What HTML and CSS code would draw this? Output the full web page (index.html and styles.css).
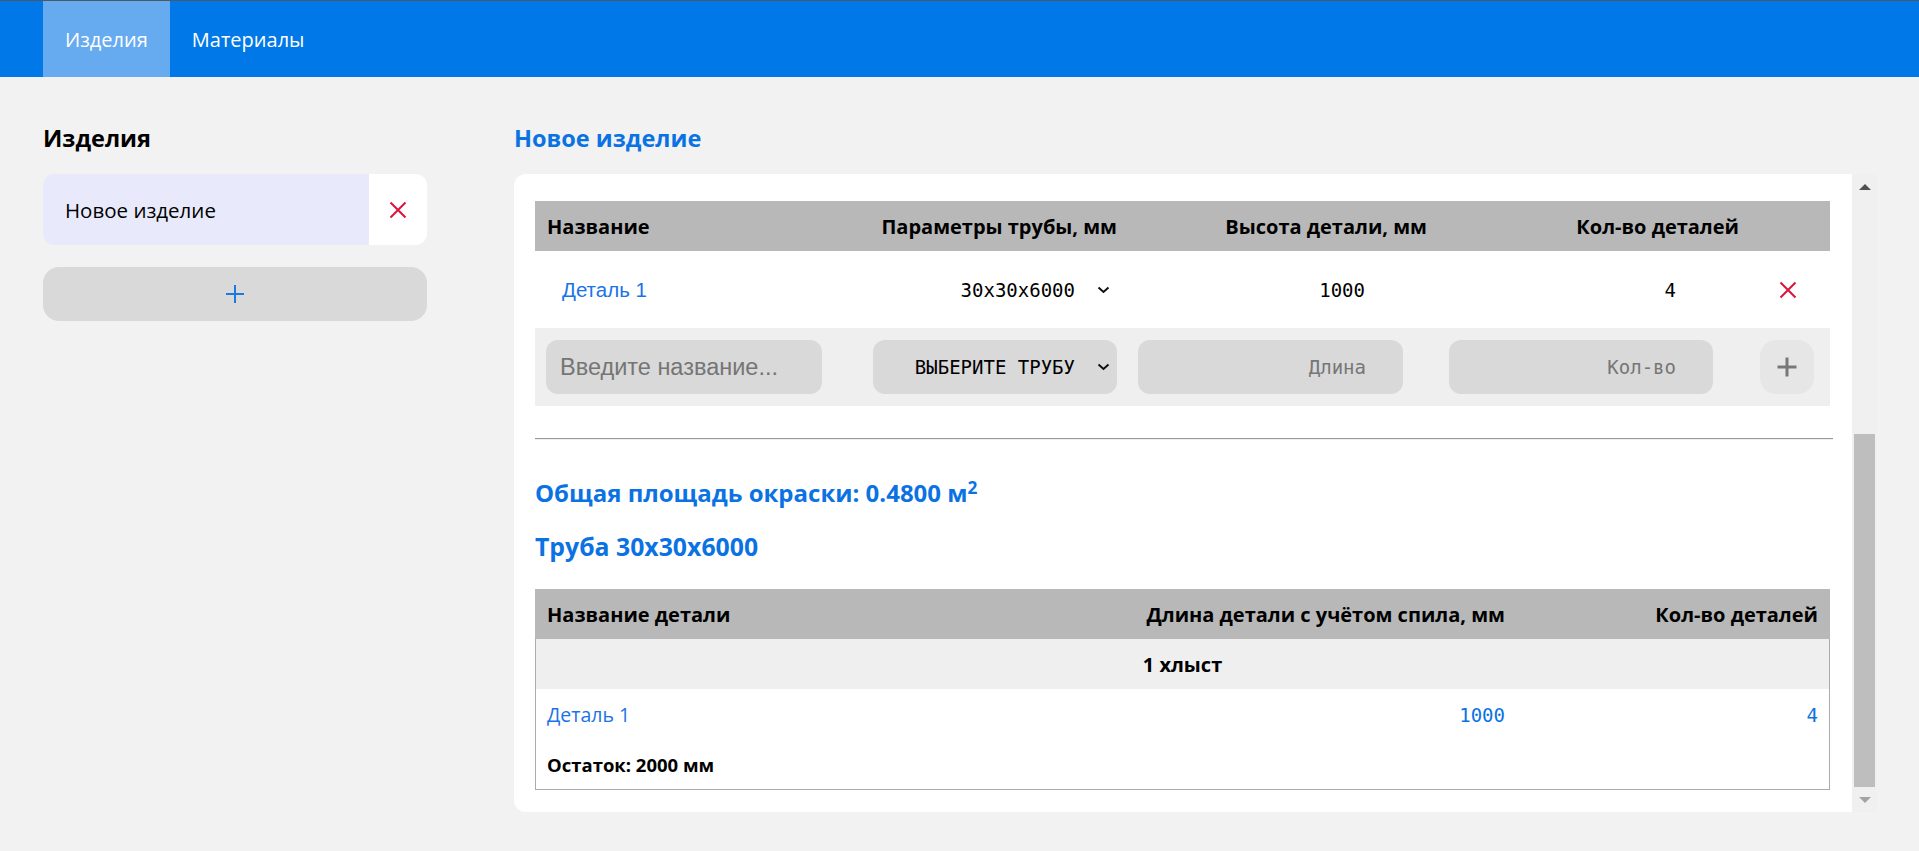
FILE: index.html
```html
<!DOCTYPE html>
<html lang="ru">
<head>
<meta charset="utf-8">
<title>Изделия</title>
<link rel="stylesheet" href="styles.css">
</head>
<body>
<header class="topbar">
  <nav class="tabs">
    <a class="tab tab-active">Изделия</a>
    <a class="tab">Материалы</a>
  </nav>
</header>
<main class="layout">
  <aside class="sidebar">
    <h2 class="side-title">Изделия</h2>
    <div class="product-item">
      <span class="product-name">Новое изделие</span>
      <button class="product-del" type="button">
        <svg width="18" height="18" viewBox="0 0 18 18"><path d="M1.5 1.5 L16.5 16.5 M16.5 1.5 L1.5 16.5" stroke="#dc143c" stroke-width="2" fill="none"/></svg>
      </button>
    </div>
    <button class="add-product" type="button">
      <svg width="20" height="20" viewBox="0 0 20 20"><path d="M10 1 V19 M1 10 H19" stroke="#1a7ae2" stroke-width="2" fill="none"/></svg>
    </button>
  </aside>
  <section class="editor">
    <h2 class="editor-title">Новое изделие</h2>
    <div class="card">
      <div class="card-body">
        <div class="parts">
          <div class="parts-row parts-head">
            <div class="c c1">Название</div>
            <div class="c c2 right">Параметры трубы, мм</div>
            <div class="c c3 right">Высота детали, мм</div>
            <div class="c c4 right">Кол-во деталей</div>
            <div class="c c5"></div>
          </div>
          <div class="parts-row parts-item">
            <div class="c c1"><a class="part-link">Деталь 1</a></div>
            <div class="c c2">
              <div class="pipe-select">
                <span class="mono">30x30x6000</span>
                <svg class="chev" width="13" height="8" viewBox="0 0 13 8"><path d="M1.5 1.5 L6.5 6 L11.5 1.5" stroke="#111" stroke-width="2" fill="none"/></svg>
              </div>
            </div>
            <div class="c c3 right"><span class="mono val-h">1000</span></div>
            <div class="c c4 right"><span class="mono val-q">4</span></div>
            <div class="c c5">
              <button class="row-del" type="button">
                <svg width="18" height="18" viewBox="0 0 18 18"><path d="M1.5 1.5 L16.5 16.5 M16.5 1.5 L1.5 16.5" stroke="#dc143c" stroke-width="2" fill="none"/></svg>
              </button>
            </div>
          </div>
          <div class="parts-row parts-new">
            <div class="c c1"><input class="field field-name" type="text" placeholder="Введите название..."></div>
            <div class="c c2">
              <div class="pipe-select pipe-select-input">
                <span class="mono">ВЫБЕРИТЕ ТРУБУ</span>
                <svg class="chev" width="13" height="8" viewBox="0 0 13 8"><path d="M1.5 1.5 L6.5 6 L11.5 1.5" stroke="#111" stroke-width="2" fill="none"/></svg>
              </div>
            </div>
            <div class="c c3"><input class="field field-num field-len" type="text" placeholder="Длина"></div>
            <div class="c c4"><input class="field field-num field-qty" type="text" placeholder="Кол-во"></div>
            <div class="c c5">
              <button class="row-add" type="button">
                <svg width="20" height="20" viewBox="0 0 20 20"><path d="M10 0.5 V19.5 M0.5 10 H19.5" stroke="#787878" stroke-width="3" fill="none"/></svg>
              </button>
            </div>
          </div>
        </div>
        <hr class="divider">
        <h3 class="summary summary-area">Общая площадь окраски: 0.4800 м<sup class="sq">2</sup></h3>
        <h3 class="summary summary-pipe">Труба 30x30x6000</h3>
        <div class="cut">
          <div class="cut-row cut-head">
            <div class="k k1">Название детали</div>
            <div class="k k2 right">Длина детали с учётом спила, мм</div>
            <div class="k k3 right">Кол-во деталей</div>
          </div>
          <div class="cut-row cut-group">
            <div class="k kall">1 хлыст</div>
          </div>
          <div class="cut-row cut-item">
            <div class="k k1"><a class="cut-link">Деталь 1</a></div>
            <div class="k k2 right"><span class="mono blue">1000</span></div>
            <div class="k k3 right"><span class="mono blue">4</span></div>
          </div>
          <div class="cut-row cut-rest">
            <div class="k kall-left">Остаток: 2000 мм</div>
          </div>
        </div>
      </div>
      <div class="scrollbar">
        <div class="sb-btn"><span class="sb-up"></span></div>
        <div class="sb-track"><div class="sb-thumb"></div></div>
        <div class="sb-btn"><span class="sb-down"></span></div>
      </div>
    </div>
  </section>
</main>
</body>
</html>
```

FILE: styles.css
```css
* { box-sizing: border-box; }

html, body {
  margin: 0;
  padding: 0;
  background: #f2f2f2;
  font-family: "Open Sans", "Noto Sans", Arial, sans-serif;
  color: #000;
}

.topbar {
  height: 77px;
  background: #0078e7;
  border-top: 1px solid #4d5864;
  padding-left: 43px;
}

.tabs {
  display: flex;
  height: 100%;
}

.tab {
  display: flex;
  align-items: center;
  padding: 0 22px;
  color: #fff;
  font-size: 20px;
  cursor: pointer;
}

.tab-active {
  background: #66aaf0;
}

.layout {
  display: flex;
  gap: 87px;
  padding: 46px 42px 0 43px;
}

.sidebar {
  width: 384px;
  flex: none;
}

.side-title,
.editor-title {
  margin: 0;
  font-size: 23.5px;
  line-height: 30px;
  font-weight: 700;
}

.editor-title {
  color: #0b72e3;
}

.product-item {
  margin-top: 21px;
  height: 71px;
  display: flex;
  border-radius: 11px;
  overflow: hidden;
  background: #e8eafc;
}

.product-name {
  flex: 1;
  display: flex;
  align-items: center;
  padding-left: 22px;
  font-size: 20.5px;
}

.product-del {
  width: 58px;
  border: 0;
  padding: 0;
  background: #fff;
  display: flex;
  align-items: center;
  justify-content: center;
}

.add-product {
  margin-top: 22px;
  width: 100%;
  height: 54px;
  border: 0;
  border-radius: 16px;
  background: #d9d9d9;
  display: flex;
  align-items: center;
  justify-content: center;
  padding: 0;
}

.editor {
  flex: 1;
}

.card {
  margin-top: 21px;
  height: 638px;
  display: flex;
}

.card-body {
  flex: 1;
  background: #fff;
  border-radius: 12px 0 0 12px;
  padding: 27px 19px 0 21px;
}

.parts {
  width: 1295px;
}

.parts-row {
  display: grid;
  grid-template-columns: 313px 279px 300px 313px 90px;
  align-items: center;
}

.c {
  display: flex;
  align-items: center;
}

.right {
  justify-content: flex-end;
}

.parts-head {
  height: 50px;
  background: #b8b8b8;
  font-weight: 700;
  font-size: 20px;
}

.parts-head .c1 { padding-left: 12px; }
.parts-head .c2 { padding-right: 10px; }
.parts-head .c3 { padding-right: 0; }
.parts-head .c4 { padding-right: 1px; }

.parts-item {
  height: 77px;
  background: #fff;
}

.part-link {
  padding-left: 27px;
  color: #1a73e8;
  font-family: "Liberation Sans", Arial, sans-serif;
  font-size: 20.5px;
  cursor: pointer;
}

.mono {
  font-family: "DejaVu Sans Mono", "Liberation Mono", monospace;
  font-size: 19px;
}

.pipe-select {
  margin-left: 25px;
  width: 244px;
  height: 54px;
  display: flex;
  align-items: center;
  justify-content: flex-end;
  gap: 22px;
  padding-right: 7px;
  border-radius: 12px;
}

.pipe-select-input {
  background: #d9d9d9;
}

.val-h { padding-right: 62px; }
.val-q { padding-right: 64px; }

.row-del {
  margin-left: 39px;
  width: 18px;
  height: 18px;
  padding: 0;
  border: 0;
  background: none;
  display: flex;
}

.parts-new {
  height: 78px;
  background: #efefef;
}

.field {
  height: 54px;
  border: 0;
  border-radius: 12px;
  background: #d9d9d9;
  outline: none;
  font-size: 19px;
}

.field-name {
  margin-left: 11px;
  width: 276px;
  padding-left: 14px;
  font-family: "Liberation Sans", Arial, sans-serif;
  font-size: 23.5px;
}

.field-name::placeholder {
  color: #757575;
}

.field-num {
  font-family: "DejaVu Sans Mono", "Liberation Mono", monospace;
  font-size: 19px;
  text-align: right;
  padding-right: 37px;
}

.field-num::placeholder {
  color: #767676;
}

.field-len {
  margin-left: 11px;
  width: 265px;
}

.field-qty {
  margin-left: 22px;
  width: 264px;
}

.row-add {
  margin-left: 20px;
  width: 54px;
  height: 54px;
  border: 0;
  border-radius: 16px;
  background: #e6e6e6;
  display: flex;
  align-items: center;
  justify-content: center;
  padding: 0;
}

.divider {
  margin: 32px 0 0 0;
  border: 0;
  border-top: 1px solid #9a9a9a;
  border-bottom: 1px solid #eeeeee;
  height: 0;
}

.summary {
  margin: 0;
  color: #0b72e3;
  font-size: 24px;
  line-height: 30px;
  font-weight: 700;
}

.sq {
  font-size: 0.72em;
  line-height: 0;
  vertical-align: 0.45em;
}

.summary-area { margin-top: 38px; }
.summary-pipe { margin-top: 23px; font-size: 24.8px; }

.cut {
  margin-top: 28px;
  width: 1295px;
  border: 1px solid #ababab;
  border-top: 0;
}

.cut-row {
  display: grid;
  grid-template-columns: 1fr 420px 312px;
  align-items: center;
}

.k {
  display: flex;
  align-items: center;
}

.k1 { padding-left: 11px; }
.k2 { padding-right: 12px; }
.k3 { padding-right: 11px; }

.cut-head {
  height: 50px;
  margin: 0 -1px;
  padding: 0 1px;
  background: #b8b8b8;
  font-weight: 700;
  font-size: 20px;
}

.cut-group {
  height: 50px;
  background: #efefef;
  font-weight: 700;
  font-size: 20px;
}

.kall {
  grid-column: 1 / -1;
  justify-content: center;
}

.kall-left {
  grid-column: 1 / -1;
  padding-left: 11px;
}

.cut-item {
  height: 51px;
}

.cut-link {
  color: #1a73e8;
  font-size: 19.5px;
  cursor: pointer;
}

.blue {
  color: #0b72e3;
}

.cut-rest {
  height: 49px;
  font-weight: 700;
  font-size: 18.5px;
}

.scrollbar {
  width: 25px;
  flex: none;
  background: #f0f0f0;
  display: flex;
  flex-direction: column;
}

.sb-btn {
  height: 25px;
  display: flex;
  align-items: center;
  justify-content: center;
}

.sb-up {
  width: 0;
  height: 0;
  border-left: 6px solid transparent;
  border-right: 6px solid transparent;
  border-bottom: 6px solid #505050;
}

.sb-down {
  width: 0;
  height: 0;
  border-left: 6px solid transparent;
  border-right: 6px solid transparent;
  border-top: 6px solid #a3a3a3;
}

.sb-track {
  flex: 1;
  display: flex;
  flex-direction: column;
  justify-content: flex-end;
  padding: 0 2px;
}

.sb-thumb {
  height: 353px;
  background: #bebebe;
}
```
